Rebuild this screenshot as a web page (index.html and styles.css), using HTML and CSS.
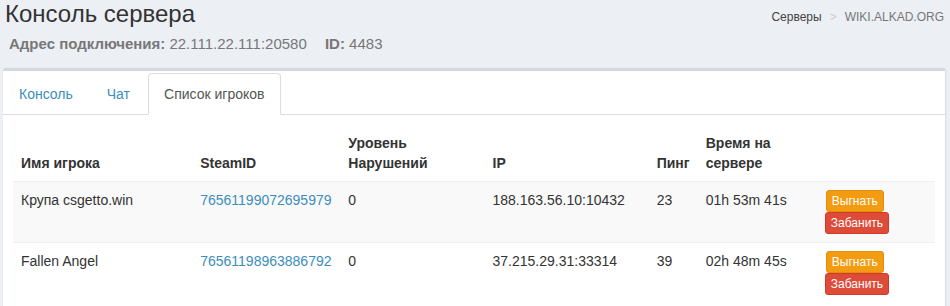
FILE: index.html
```html
<!DOCTYPE html>
<html lang="ru">
<head>
  <meta charset="UTF-8">
  <meta name="viewport" content="width=device-width, initial-scale=1.0">
  <title>Консоль сервера</title>

  <link rel="stylesheet" href="styles.css">
</head>
<body>
  <div class="content-header">
    <div class="title-block">
      <h1>Консоль сервера</h1>
      <div class="server-info">
        <b>Адрес подключения:</b> 22.111.22.111:20580
        <span class="server-id"><b>ID:</b> 4483</span>
      </div>
    </div>
    <ol class="breadcrumb">
      <li><a href="#">Серверы</a></li>
      <li class="sep">&gt;</li>
      <li class="current">WIKI.ALKAD.ORG</li>
    </ol>
  </div>

  <div class="box">
    <ul class="nav-tabs">
      <li><a href="#">Консоль</a></li>
      <li><a href="#">Чат</a></li>
      <li class="active"><a href="#">Список игроков</a></li>
    </ul>

    <div class="tab-content">
      <table class="players">
        <colgroup>
          <col class="c-name">
          <col class="c-steam">
          <col class="c-level">
          <col class="c-ip">
          <col class="c-ping">
          <col class="c-time">
          <col class="c-act">
        </colgroup>
        <thead>
          <tr>
            <th>Имя игрока</th>
            <th>SteamID</th>
            <th>Уровень<br>Нарушений</th>
            <th>IP</th>
            <th>Пинг</th>
            <th>Время на<br>сервере</th>
            <th></th>
          </tr>
        </thead>
        <tbody>
          <tr>
            <td>Крупа csgetto.win</td>
            <td><a href="#">76561199072695979</a></td>
            <td>0</td>
            <td>188.163.56.10:10432</td>
            <td>23</td>
            <td>01h 53m 41s</td>
            <td>
              <div class="actions">
                <button class="btn btn-warning">Выгнать</button>
                <button class="btn btn-danger">Забанить</button>
              </div>
            </td>
          </tr>
          <tr>
            <td>Fallen Angel</td>
            <td><a href="#">76561198963886792</a></td>
            <td>0</td>
            <td>37.215.29.31:33314</td>
            <td>39</td>
            <td>02h 48m 45s</td>
            <td>
              <div class="actions">
                <button class="btn btn-warning">Выгнать</button>
                <button class="btn btn-danger">Забанить</button>
              </div>
            </td>
          </tr>
        </tbody>
      </table>
    </div>
  </div>
</body>
</html>
```

FILE: styles.css
```css
    body{
      margin:0;
      background-color:#ecf0f5;
      font-family:"Liberation Sans", Arial, sans-serif;
      font-size:14px;
      line-height:20px;
      color:#333;
    }
    a{
      color:#3c8dbc;
      text-decoration:none;
    }

    .content-header{
      display:flex;
      justify-content:space-between;
      padding:0 6px 0 5px;
    }
    .content-header h1{
      margin:0;
      font-size:24px;
      font-weight:normal;
      line-height:28px;
      color:#333;
    }
    .server-info{
      margin-top:6px;
      padding-left:4px;
      font-size:15px;
      line-height:20px;
      color:#777;
    }
    .server-id{
      margin-left:14px;
    }

    .breadcrumb{
      display:flex;
      margin:8px 0 0 0;
      padding:0;
      list-style:none;
      font-size:12px;
      line-height:18px;
    }
    .breadcrumb a{
      color:#444;
    }
    .breadcrumb .sep{
      color:#ccc;
      padding:0 8px;
    }
    .breadcrumb .current{
      color:#777;
    }

    .box{
      margin:14px 5px 0 3px;
      background-color:#fff;
      border-top:3px solid #d2d6de;
      border-radius:3px;
      box-shadow:0 1px 1px rgba(0,0,0,0.1), 1px 0 2px rgba(0,0,0,0.08);
    }

    .nav-tabs{
      display:flex;
      margin:0;
      padding:0;
      list-style:none;
      border-bottom:1px solid #ddd;
    }
    .nav-tabs li{
      margin-right:2px;
      margin-bottom:-1px;
    }
    .nav-tabs li a{
      display:block;
      margin-top:2px;
      padding:10px 15px;
      border:1px solid transparent;
      border-radius:4px 4px 0 0;
      color:#3c8dbc;
    }
    .nav-tabs li.active a{
      color:#555;
      background-color:#fff;
      border-color:#ddd;
      border-bottom-color:transparent;
    }

    .tab-content{
      padding:10px;
    }

    table.players{
      width:100%;
      border-collapse:collapse;
      table-layout:fixed;
    }
    .c-name{ width:179px; }
    .c-steam{ width:148px; }
    .c-level{ width:144px; }
    .c-ip{ width:164px; }
    .c-ping{ width:49px; }
    .c-time{ width:119px; }
    .c-act{ width:118px; }

    .players th, .players td{
      padding:8px;
      text-align:left;
      white-space:nowrap;
    }
    .players th{
      vertical-align:bottom;
      font-weight:bold;
      border-bottom:1px solid #f0f0f0;
    }
    .players td{
      vertical-align:top;
      border-top:1px solid #f0f0f0;
    }
    .players tbody tr:nth-child(odd){
      background-color:#f9f9f9;
    }

    .actions{
      display:flex;
      flex-direction:column;
      align-items:flex-start;
    }
    .btn{
      font-family:"Liberation Sans", Arial, sans-serif;
      font-size:12px;
      line-height:18px;
      padding:1px 5px;
      border:1px solid transparent;
      border-radius:3px;
      color:#fff;
      cursor:pointer;
    }
    .btn-warning{
      background-color:#f39c12;
      border-color:#e08e0b;
      margin-left:1px;
    }
    .btn-danger{
      background-color:#dd4b39;
      border-color:#d73925;
    }
```
